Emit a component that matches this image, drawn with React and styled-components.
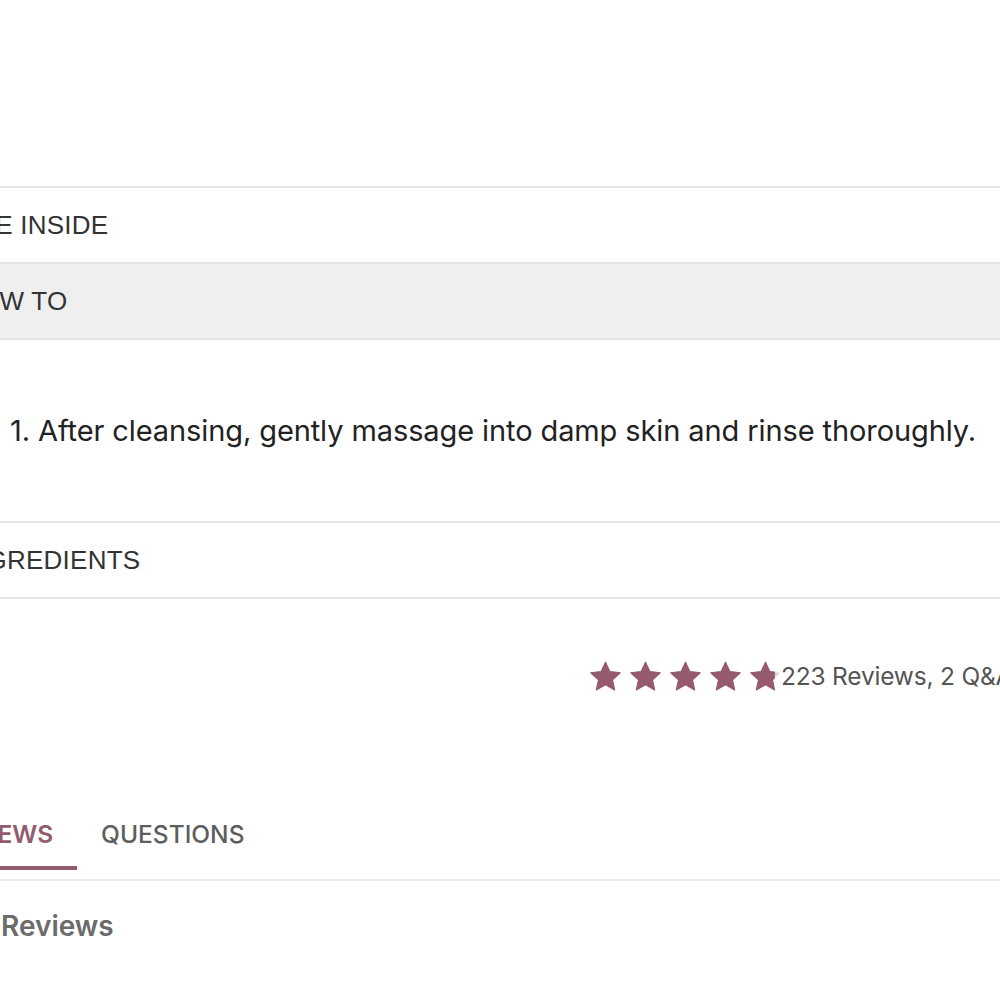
import React from "react";
import styled, { createGlobalStyle } from "styled-components";

const Global = createGlobalStyle`
  html, body { margin: 0; padding: 0; background: #ffffff; }
  body { overflow: hidden; width: 1000px; height: 1000px; }
`;

const Page = styled.div`
  margin-left: -40px;
  width: 1040px;
  padding-top: 186px;
  display: flex;
  flex-direction: column;
`;

const Accordion = styled.div`
  border-top: 2px solid #e4e4e4;
  display: flex;
  flex-direction: column;
`;

const Header = styled.div`
  height: 74px;
  display: flex;
  align-items: center;
  background: ${(p) => (p.$open ? "#efefef" : "#ffffff")};
  border-bottom: 2px solid #e4e4e4;
  font-family: "Liberation Sans", Arial, sans-serif;
  font-size: 26px;
  color: #333333;
  letter-spacing: 0.25px;
  white-space: nowrap;
`;

const Panel = styled.div`
  height: 181px;
  display: flex;
  align-items: center;
  border-bottom: 2px solid #e4e4e4;
  font-family: "Inter", sans-serif;
  font-size: 29px;
  color: #222222;
`;

const Step = styled.span`
  padding-left: 50px;
  letter-spacing: -0.1px;
  white-space: nowrap;
`;

const RatingRow = styled.div`
  height: 154px;
  display: flex;
  align-items: center;
  padding-left: 628px;
`;

const Stars = styled.div`
  display: flex;
  gap: 5px;
`;

const Count = styled.span`
  font-family: "Inter", sans-serif;
  font-size: 24.5px;
  color: #555555;
  white-space: nowrap;
  margin-left: -2px;
  letter-spacing: -0.2px;
`;

const Tabs = styled.div`
  margin-top: 66px;
  margin-left: -42px;
  padding-bottom: 9px;
  display: flex;
  border-bottom: 2px solid #ececec;
  font-family: "Inter", sans-serif;
  font-size: 24.5px;
`;

const Tab = styled.div`
  padding: 0 24px 17px;
  line-height: 30px;
  white-space: nowrap;
  font-weight: 500;
  color: ${(p) => (p.$active ? "#935b6e" : "#5e5e5e")};
  border-bottom: 4px solid ${(p) => (p.$active ? "#935b6e" : "transparent")};
  ${(p) => (p.$active ? "font-weight: 600;" : "")}
`;

const Heading = styled.div`
  margin-top: 28px;
  padding-left: 41px;
  line-height: 34px;
  font-family: "Inter", sans-serif;
  font-weight: 600;
  font-size: 28px;
  color: #6b6b6b;
`;

const STAR = "M12 1.5l3.1 6.6 7.2.8-5.4 4.9 1.5 7.1L12 17.3 5.6 20.9l1.5-7.1L1.7 8.9l7.2-.8z";

const Star = ({ partial }) => (
  <svg width="35" height="33" viewBox="0 0 24 23">
    <defs>
      <clipPath id="part">
        <rect x="0" y="0" width="18.5" height="23" />
      </clipPath>
    </defs>
    {partial && <path d={STAR} fill="#ddd3d6" />}
    <path
      d={STAR}
      fill="#955a6d"
      stroke="#955a6d"
      strokeWidth="0.8"
      strokeLinejoin="round"
      clipPath={partial ? "url(#part)" : undefined}
    />
  </svg>
);

export default function App() {
  return (
    <>
      <Global />
      <Page>
        <Accordion>
          <Header>THE INSIDE</Header>
          <Header $open>HOW TO</Header>
          <Panel>
            <Step>1. After cleansing, gently massage into damp skin and rinse thoroughly.</Step>
          </Panel>
          <Header>INGREDIENTS</Header>
        </Accordion>
        <RatingRow>
          <Stars>
            <Star />
            <Star />
            <Star />
            <Star />
            <Star partial />
          </Stars>
          <Count>223 Reviews, 2 Q&amp;As</Count>
        </RatingRow>
        <Tabs>
          <Tab $active>REVIEWS</Tab>
          <Tab>QUESTIONS</Tab>
        </Tabs>
        <Heading>Reviews</Heading>
      </Page>
    </>
  );
}
